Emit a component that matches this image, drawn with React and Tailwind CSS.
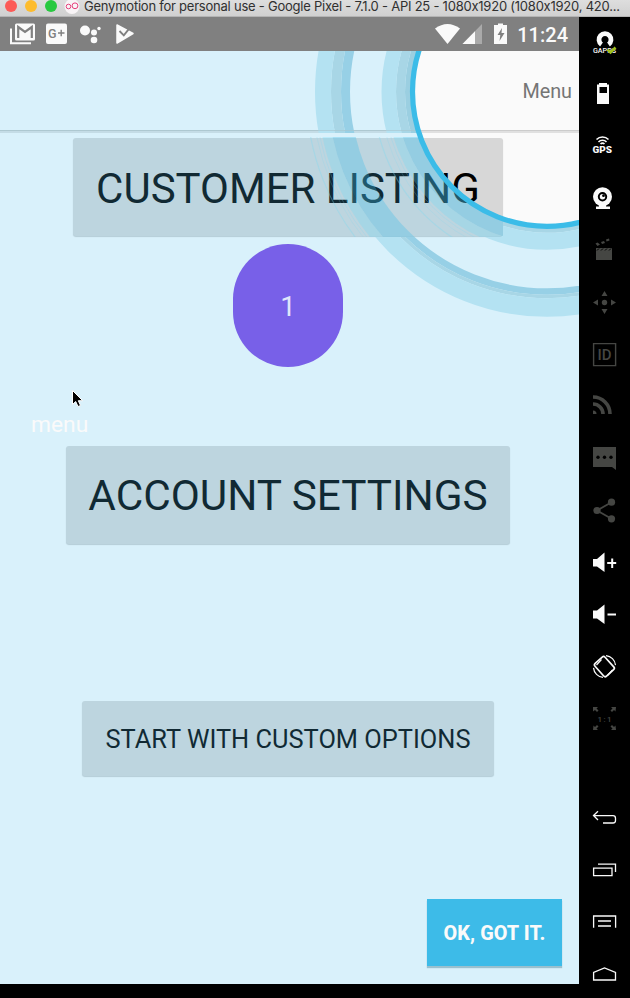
import React from "react";

const W = "#fafafa";
const D = "#454643";

/* Concentric pulse rings around the tap target; each band is [inner radius, outer radius, fill, opacity]. */
function Rings({ bands, clip }) {
  return (
    <g clipPath={`url(#${clip})`}>
      {bands.map(([a, b, fill, o], i) => (
        <circle key={i} cx="547" cy="40.8" r={(a + b) / 2} fill="none" stroke={fill} strokeWidth={b - a} strokeOpacity={o} />
      ))}
    </g>
  );
}

const upper = [
  [197, 206, "#97d0e6", 1], [206, 216, "#a8d6e6", 1], [216, 232, "#b4e2f2", 1],
  [136, 142, "#9bcfe1", 1], [142, 151, "#a8d6e6", 1], [151, 165.5, "#b4e2f2", 1],
];
const lower = [
  [196.5, 203, "#97d0e6", 1], [203, 206.5, "#a8d6e6", 1], [206.5, 225, "#b4e2f2", 1],
  [136, 141, "#a8d6e6", 1], [141, 158, "#b4e2f2", 1],
];
const middle = [
  [196.5, 219, "#3dbde8", 0.32], [219, 229, "#60d8fa", 0.24], [231, 232, "#7fd9f2", 0.25], [234, 235, "#7fd9f2", 0.2], [240, 241.2, "#7fd9f2", 0.35],
  [136, 151, "#3dbde8", 0.32], [151, 160, "#60d8fa", 0.24], [162, 163, "#7fd9f2", 0.25], [166, 167, "#7fd9f2", 0.2], [173, 174.2, "#7fd9f2", 0.35],
];

function Overlay() {
  return (
    <svg className="pointer-events-none absolute inset-0" width="579" height="933" viewBox="0 0 579 933">
      <defs>
        <clipPath id="top"><rect width="579" height="82" /></clipPath>
        <clipPath id="mid"><rect x="73" y="86" width="430" height="100" /></clipPath>
        <clipPath id="low"><path d="M503 82H579V933H0V186H503Z" /></clipPath>
      </defs>
      <path fillRule="evenodd" fill="#55cdff" fillOpacity="0.2" d="M0 0H579V933H0ZM411.5 40.8a135.5 135.5 0 1 0 271 0a135.5 135.5 0 1 0 -271 0Z" />
      <Rings bands={upper} clip="top" />
      <Rings bands={middle} clip="mid" />
      <Rings bands={lower} clip="low" />
      <path d="M0 79.500H417" stroke="#a9c4cd" strokeOpacity=".6" />
      <circle cx="547" cy="40.8" r="134.5" fill="none" stroke="#3bbce8" strokeWidth="5.2" />
    </svg>
  );
}

const F = { fontFamily: "Roboto, sans-serif" };

const tools = [
  <g key="gapps">
    <path d="M22.500 28.500 A6 6 0 1 1 29.500 28.500" fill="none" stroke={W} strokeWidth="4.800" />
    <circle cx="26" cy="24" r="2.600" fill="#000" />
    <text x="14" y="37" fontSize="8" fontWeight="500" fill={W} textLength="23" lengthAdjust="spacingAndGlyphs" {...F}>GAPPS</text>
    <path d="M28.500 33.500l3 3 5-5" fill="none" stroke="#9fc01c" strokeWidth="2.600" />
  </g>,
  <path key="battery" fill={W} fillRule="evenodd" d="M20 15h8v1.500h2V36H18V16.500h2zM20.500 19v6h7.500v-6z" />,
  <g key="gps">
    <g fill="none" stroke={W} strokeWidth="1.6">
      <path d="M17.500 19.500a8.500 8.500 0 0 1 12 0M19.500 22a5.500 5.500 0 0 1 8 0" />
      <path d="M21.500 24a3 3 0 0 1 4 0" />
    </g>
    <text x="13.500" y="33.300" fontSize="9" fontWeight="900" fill={W} textLength="19.500" lengthAdjust="spacingAndGlyphs" {...F}>GPS</text>
  </g>,
  <g key="cam">
    <circle cx="23.500" cy="24.700" r="9.500" fill={W} />
    <circle cx="23.500" cy="24.700" r="3.700" fill={W} stroke="#000" strokeWidth="2" />
    <circle cx="24.500" cy="23.700" r="1.400" fill="#000" />
    <path d="M20 33h7v1.500h4V37H17v-2.500h3z" fill={W} />
  </g>,
  <g key="clap" fill={D}>
    <path d="M17 24h16v12H17z" />
    <path d="M16.500 19.500l2-1 2.500 2-2.500 1.500zM22 18l3-1 1 2-3 1zM27 15.500l3-1 .5 2-3 1z" />
    <path d="M18 26.500l2-2M22 26.500l2-2M26 26.500l2-2M30 26.500l2-2" stroke="#000" strokeWidth="1" />
  </g>,
  <g key="move" fill={D}>
    <circle cx="25.500" cy="26.500" r="2.700" />
    <path d="M25.500 15l3 5h-6zM25.500 38l3-5h-6zM14 26.500l5-3v6zM37 26.500l-5-3v6z" />
  </g>,
  <g key="id">
    <path d="M14.600 15.600h22v22h-22z" fill="none" stroke={D} strokeWidth="1.400" />
    <text x="18.500" y="32" fontSize="15" fontWeight="500" fill={D} textLength="14" {...F}>ID</text>
  </g>,
  <g key="rss" fill="none" stroke={D} strokeWidth="3.600">
    <path d="M14 17a17 17 0 0 1 17 17M14 24a10 10 0 0 1 10 10" />
    <path d="M14 30.500a3.500 3.500 0 0 1 3.500 3.500H14z" fill={D} stroke="none" />
  </g>,
  <g key="sms">
    <path d="M14 15h23v23l-4-3H14z" fill={D} />
    <g fill="#000"><circle cx="19" cy="25.200" r="1.700" /><circle cx="25.500" cy="25.200" r="1.700" /><circle cx="32" cy="25.200" r="1.700" /></g>
  </g>,
  <g key="share" fill={D} stroke={D}>
    <path d="M32.500 18.200L18 26.500l14.500 8.300" fill="none" strokeWidth="1.800" />
    <g stroke="none"><circle cx="32.500" cy="18.200" r="3.600" /><circle cx="18" cy="26.500" r="3.600" /><circle cx="32.500" cy="34.800" r="3.600" /></g>
  </g>,
  <path key="up" fill={W} d="M14 23h4l7.500-6.500v19.500L18 30.500h-4zM32.200 22.500h2v3.500h3v2h-3v4h-2v-4h-4v-2h4z" />,
  <path key="down" fill={W} d="M14 22.500h4l7.500-6v19.500L18 30.500h-4zM28.500 25.500H37v2h-8.500z" />,
  <g key="rotate" fill="none" stroke={W}>
    <rect x="18.600" y="18" width="13.500" height="17" rx="2" transform="rotate(-42 25.500 26.500)" strokeWidth="1.700" />
    <path d="M17.500 25l5-5.500M28.500 35.500l5-5.500" strokeWidth="1.200" />
    <path d="M27 15.600a10.500 10.500 0 0 1 9.500 9.500M24 37.400a10.500 10.500 0 0 1-9.500-9.500" strokeWidth="1.200" />
  </g>,
  <g key="scale" fill={D}>
    <path d="M14 15h5l-1.500 1.500 2 2-1.500 1.500-2-2L14 19.500zM37 15h-5l1.500 1.500-2 2 1.500 1.500 2-2 1.500 1.500zM14 38h5l-1.500-1.500 2-2-1.500-1.500-2 2-1.500-1.500zM37 38h-5l1.500-1.500-2-2 1.500-1.500 2 2 1.500-1.500z" />
    <text x="18.500" y="29.500" fontSize="8" fontWeight="500" textLength="14" {...F}>1:1</text>
  </g>,
];

const nav = [
  <path key="back" d="M19 20.200l-4.500 4.300 4.500 4.500M14.500 24.700H34q2.500 0 2.500 2.500V29.500q0 2.500-2.500 2.500H24" />,
  <path key="recent" d="M14.600 25.200h18.400v7.400H14.600zM19 21.200h17.500V29" />,
  <path key="menu" d="M14.600 32.700V21h22v11.700M19 26h13M19 31h13" />,
  <path key="home" d="M14.600 33V25.500L25.500 21l11 4.500V33z" />,
];

function Slot({ children }) {
  return (
    <svg className="block shrink-0" width="51" height="52" viewBox="0 0 51 52">
      {children}
    </svg>
  );
}

function Sidebar() {
  return (
    <aside className="-mt-px flex w-[51px] flex-col">
      {tools.map((t, i) => <Slot key={i}>{t}</Slot>)}
      <div className="h-[47px] shrink-0" />
      {nav.map((t, i) => (
        <Slot key={i}><g fill="none" stroke={W} strokeWidth="1.3">{t}</g></Slot>
      ))}
    </aside>
  );
}

function TitleBar() {
  return (
    <div className="relative z-10 flex h-[17px] items-start border-b border-[#b4b4b4] bg-gradient-to-b from-[#dedede] to-[#d0d0d0]">
      <div className="flex h-3 items-center gap-2 pl-[5px]">
        <i className="size-3 rounded-full bg-[#fc5b57]" />
        <i className="size-3 rounded-full bg-[#fdbc2e]" />
        <i className="size-3 rounded-full bg-[#28c940]" />
      </div>
      <svg className="ml-[7px] shrink-0" width="16" height="14" viewBox="0 0 16 14">
        <circle cx="8" cy="6.500" r="7.500" fill="#f8f4f6" />
        <circle cx="4.500" cy="6.500" r="2.300" fill="none" stroke="#e6407c" />
        <circle cx="11" cy="5.800" r="2.900" fill="none" stroke="#e6407c" />
      </svg>
      <span className="ml-[4px] whitespace-nowrap font-['Inter',sans-serif] text-[13px] leading-[13px] tracking-[-0.23px] text-[#303030]">
        Genymotion for personal use - Google Pixel - 7.1.0 - API 25 - 1080x1920 (1080x1920, 420...
      </span>
    </div>
  );
}

function StatusBar() {
  return (
    <div className="flex h-[34px] items-center bg-[#808080] text-[#fafafa]">
      <svg width="140" height="34" viewBox="0 0 140 34" fill="#fafafa">
        <path d="M11 11.500v14.700h20" fill="none" stroke="#fafafa" strokeWidth="2" />
        <rect x="15" y="6.500" width="20" height="17" rx="1.500" />
        <path d="M18.200 21V10L25 15l6.800-5V21" fill="none" stroke="#808080" strokeWidth="2.200" />
        <rect x="46" y="6.500" width="21" height="20.500" rx="2" />
        <text x="48" y="21" fontSize="12.500" fontWeight="500" fill="#808080" fontFamily="Roboto, sans-serif">G</text>
        <path d="M58 16h6.500M61.200 12.700v6.600" stroke="#808080" strokeWidth="1.400" />
        <circle cx="85" cy="13.500" r="5" /><circle cx="94" cy="15.500" r="3" /><circle cx="94" cy="23" r="3.300" /><circle cx="99" cy="11.500" r="1.700" />
        <path d="M117 8V26L133 16.500z" stroke="#fafafa" strokeWidth="1.500" strokeLinejoin="round" />
        <path d="M119.500 14l4.300 4.300 8-10" fill="none" stroke="#808080" strokeWidth="1.900" />
      </svg>
      <div className="flex-1" />
      <svg width="78" height="34" viewBox="0 0 78 34" fill="#fafafa">
        <path d="M0 11.500q12.500-9 25 0L12.500 27z" />
        <path d="M47 7v20H27.500z" opacity=".35" /><path d="M40 14.200V27H27.500z" />
        <path fillRule="evenodd" d="M63 6.500h5V8h4v19H59V8h4zM67 11l-4.500 7h2.800l-.8 6 5-8h-3z" />
      </svg>
      <span className="ml-[4px] mr-[11px] whitespace-nowrap pt-[2px] font-['Roboto',sans-serif] text-[20px] font-medium leading-[32px]">11:24</span>
    </div>
  );
}

const btn = "flex shrink-0 items-center justify-center whitespace-nowrap rounded-[3px] bg-[#d7d7d7] pt-[2px] font-['Roboto',sans-serif] text-black shadow-[0_1px_1px_rgba(0,0,0,0.18)]";

export default function App() {
  return (
    <div className="h-[998px] w-[630px] overflow-hidden bg-black">
      <TitleBar />
      <div className="flex">
        <main className="w-[579px]">
          <StatusBar />
          <div className="relative flex h-[933px] flex-col items-center overflow-hidden bg-[#fafafa] font-['Roboto',sans-serif]">
            <header className="flex h-[79px] w-full shrink-0 items-center justify-end pr-[7px] pt-[2px] text-[19.800px] text-[#757575]">Menu</header>
            <div className="h-[3px] w-full shrink-0 border-t border-[#cccccc] bg-[#e0e0e0]" />
            <button className={`${btn} mr-[3px] mt-[5px] h-[98px] w-[430px] text-[42px]`}>CUSTOMER LISTING</button>
            <button className="relative z-10 mr-[3px] mt-[8px] h-[123px] w-[110px] shrink-0 rounded-[55px] bg-[#7860e8] pt-[2px] text-[28px] text-[#dfe6fb]">1</button>
            <button className={`${btn} mr-[3px] mt-[79px] h-[98px] w-[444px] text-[42.300px]`}>ACCOUNT SETTINGS</button>
            <button className={`${btn} mr-[3px] mt-[157px] h-[75px] w-[412px] text-[25.400px]`}>START WITH CUSTOM OPTIONS</button>
            <button className="relative z-10 mr-[17px] mt-[123px] h-[67px] w-[135px] shrink-0 self-end whitespace-nowrap bg-[#3dbbe8] pt-[2px] text-[19.800px] font-extrabold tracking-[0.1px] text-[#fafafa] shadow-[0_2px_1px_rgba(60,120,140,0.4)]">OK, GOT IT.</button>
            <Overlay />
            <span className="absolute left-[31px] top-[360px] text-[22.800px] leading-[28px] text-[#fafafa]">menu</span>
            <svg className="absolute left-[71px] top-[338px]" width="14" height="20" viewBox="0 0 14 20">
              <path d="M1.500 1.500v14l3.200-3 2.300 5 2.500-1-2.200-4.800h4.400z" fill="#000" stroke="#fff" strokeWidth="1" />
            </svg>
          </div>
        </main>
        <Sidebar />
      </div>
    </div>
  );
}
